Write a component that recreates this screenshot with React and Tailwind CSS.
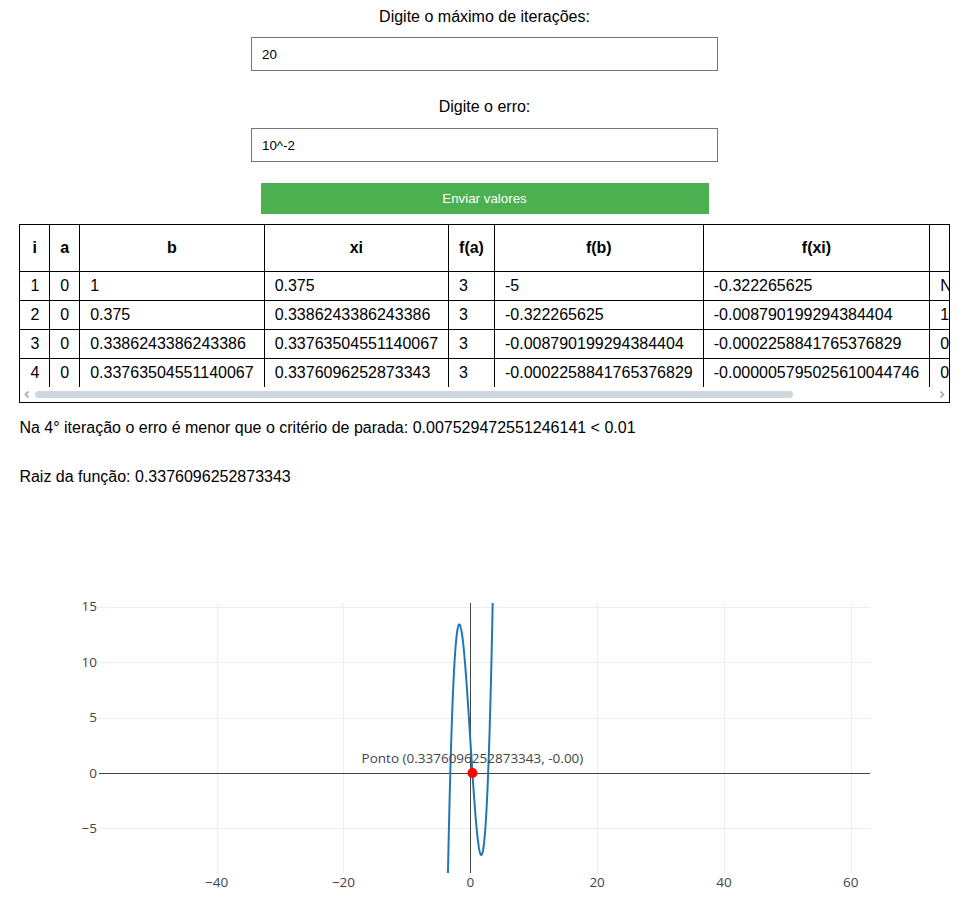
import React from 'react';

const linhas = [
  { i: 1, a: 0, b: '1', xi: '0.375', fa: 3, fb: '-5', fxi: '-0.322265625', erro: 'NaN' },
  { i: 2, a: 0, b: '0.375', xi: '0.3386243386243386', fa: 3, fb: '-0.322265625', fxi: '-0.008790199294384404', erro: '10.7421875' },
  { i: 3, a: 0, b: '0.3386243386243386', xi: '0.33763504551140067', fa: 3, fb: '-0.008790199294384404', fxi: '-0.0002258841765376829', erro: '0.2930040595282455' },
  { i: 4, a: 0, b: '0.33763504551140067', xi: '0.3376096252873343', fa: 3, fb: '-0.0002258841765376829', fxi: '-0.000005795025610044746', erro: '0.007529472551246141' },
];

// area do grafico (coordenadas do svg)
const L = 80;
const T = 100;
const W = 771;
const H = 270;
const X0 = -58.56;
const X1 = 63.04;
const Y0 = -9.02;
const Y1 = 15.33;

const px = (x) => L + ((x - X0) / (X1 - X0)) * W;
const py = (y) => T + ((Y1 - y) / (Y1 - Y0)) * H;
// meio pixel pra linha de 1px ficar nitida
const rx = (x) => Math.round(px(x)) + 0.5;
const ry = (y) => Math.round(py(y)) + 0.5;

const f = (x) => x ** 3 - 9 * x + 3;

function Grafico() {
  const pts = [];
  for (let x = -5; x <= 5; x += 0.01) {
    pts.push(`${px(x).toFixed(2)},${py(f(x)).toFixed(2)}`);
  }
  const raiz = 0.3376096252873343;
  const fonte = { fontFamily: '"Open Sans", verdana, arial, sans-serif', fill: '#444', fontSize: 13.5 };

  return (
    <svg width="931" height="450" viewBox="0 0 931 450">
      <defs>
        <clipPath id="area">
          <rect x={L} y={T} width={W} height={H} />
        </clipPath>
      </defs>
      {[-40, -20, 20, 40, 60].map((x) => (
        <line key={x} x1={rx(x)} x2={rx(x)} y1={T} y2={T + H} stroke="#eee" strokeWidth="1" />
      ))}
      {[-5, 5, 10, 15].map((y) => (
        <line key={y} x1={L} x2={L + W} y1={ry(y)} y2={ry(y)} stroke="#eee" strokeWidth="1" />
      ))}
      <line x1={rx(0)} x2={rx(0)} y1={T} y2={T + H} stroke="#444" strokeWidth="1" />
      <line x1={L} x2={L + W} y1={ry(0)} y2={ry(0)} stroke="#444" strokeWidth="1" />
      <g clipPath="url(#area)">
        <polyline points={pts.join(' ')} fill="none" stroke="#1f77b4" strokeWidth="2" />
        <circle cx={px(raiz)} cy={py(0)} r="5" fill="red" />
        <text x={px(raiz)} y={py(0) - 10} textAnchor="middle" style={fonte}>
          Ponto (0.3376096252873343, -0.00)
        </text>
      </g>
      {[-5, 0, 5, 10, 15].map((y) => (
        <text key={y} x={L - 2} y={py(y)} dy="0.35em" textAnchor="end" style={fonte}>
          {y < 0 ? `\u2212${-y}` : y}
        </text>
      ))}
      {[-40, -20, 0, 20, 40, 60].map((x) => (
        <text key={x} x={px(x)} y={T + H + 13.5} textAnchor="middle" style={fonte}>
          {x < 0 ? `\u2212${-x}` : x}
        </text>
      ))}
    </svg>
  );
}

// barra de rolagem horizontal (desenhada, o navegador nao mostra a nativa)
function Rolagem() {
  return (
    <div className="flex h-[15px] items-center bg-white">
      <svg width="15" height="15" viewBox="0 0 15 15" className="shrink-0">
        <path d="M8.5 4.5 L5.5 7.5 L8.5 10.5" fill="none" stroke="#a3a3a3" strokeWidth="1.6" />
      </svg>
      <div className="h-[7px] w-[758px] rounded-full bg-[#cfd7df]" />
      <div className="flex-1" />
      <svg width="15" height="15" viewBox="0 0 15 15" className="shrink-0">
        <path d="M6.5 4.5 L9.5 7.5 L6.5 10.5" fill="none" stroke="#a3a3a3" strokeWidth="1.6" />
      </svg>
    </div>
  );
}

export default function App() {
  return (
    <div className="h-[908px] overflow-hidden bg-white text-black text-[16px] leading-[normal] font-['Liberation_Sans',Arial,sans-serif]">
      <p className="pt-[8px] text-center leading-[18px]">Digite o máximo de iterações:</p>
      <input
        defaultValue="20"
        className="block mx-auto mt-[11px] w-[467px] h-[34px] border border-[#767676] px-[10px] text-[13.33px] outline-none"
      />
      <p className="mt-[27px] text-center leading-[18px]">Digite o erro:</p>
      <input
        defaultValue="10^-2"
        className="block mx-auto mt-[12px] w-[467px] h-[34px] border border-[#767676] px-[10px] text-[13.33px] outline-none"
      />
      <button className="block mx-auto mt-[21px] w-[448px] h-[31px] bg-[#4CAF50] text-white text-[13.33px]">
        Enviar valores
      </button>

      <div className="mx-[2%] mt-[10px] border border-black">
        <div className="overflow-hidden">
          <table className="border-collapse border-hidden whitespace-nowrap">
            <thead>
              <tr>
                {['i', 'a', 'b', 'xi', 'f(a)', 'f(b)', 'f(xi)', 'Erro (%)'].map((h) => (
                  <th key={h} className="border border-black px-[10px] py-[14px] font-bold text-center">
                    {h}
                  </th>
                ))}
              </tr>
            </thead>
            <tbody>
              {linhas.map((l) => (
                <tr key={l.i}>
                  {[l.i, l.a, l.b, l.xi, l.fa, l.fb, l.fxi, l.erro].map((v, idx) => (
                    <td key={idx} className="border border-black px-[10px] py-[5px] text-left">
                      {v}
                    </td>
                  ))}
                </tr>
              ))}
            </tbody>
          </table>
        </div>
        <Rolagem />
      </div>

      <p className="mx-[2%] mt-[16px]">
        Na 4° iteração o erro é menor que o critério de parada: 0.007529472551246141 &lt; 0.01
      </p>
      <p className="mx-[2%] mt-[31px]">Raiz da função: 0.3376096252873343</p>

      <div className="mx-[2%] mt-[17px] h-[450px]">
        <Grafico />
      </div>
    </div>
  );
}
